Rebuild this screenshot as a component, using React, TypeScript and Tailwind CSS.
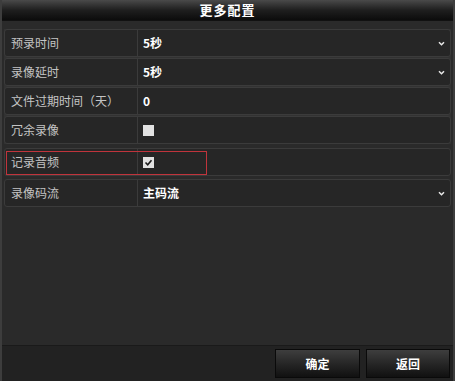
import React from 'react';

const font = { fontFamily: '"Noto Sans CJK SC", "Noto Sans", sans-serif' };

type Row = {
  label: string;
  kind: 'select' | 'text' | 'check';
  value?: string;
  checked?: boolean;
};

const rows: Row[] = [
  { label: '预录时间', kind: 'select', value: '5秒' },
  { label: '录像延时', kind: 'select', value: '5秒' },
  { label: '文件过期时间（天）', kind: 'text', value: '0' },
  { label: '冗余录像', kind: 'check', checked: false },
];

const Chevron = () => (
  <svg width="7" height="5" viewBox="0 0 7 5" className="mr-[5px]">
    <path d="M1 1.2 L3.5 3.7 L6 1.2" stroke="#e8e8e8" strokeWidth="1.5" fill="none" />
  </svg>
);

const Checkbox = ({ checked }: { checked?: boolean }) => (
  <div className="w-[11px] h-[11px] bg-[#e2e2e2] flex items-center justify-center">
    {checked && (
      <svg width="9" height="9" viewBox="0 0 9 9">
        <path d="M1.5 4.5 L3.7 6.7 L7.5 2.2" stroke="#1a1a1a" strokeWidth="1.6" fill="none" />
      </svg>
    )}
  </div>
);

const SettingRow = ({ row, highlight }: { row: Row; highlight?: boolean }) => (
  <div className="relative h-[28px] flex border border-[#3b3b3b] rounded-[3px] bg-[#262626]">
    <div className="w-[133px] shrink-0 flex items-center pl-[6px] text-[12px] text-[#c4c4c4] border-r border-[#3b3b3b]">
      {row.label}
    </div>
    <div className="flex-1 flex items-center justify-between pl-[5px] text-[12px] text-white font-bold">
      {row.kind === 'check' ? <Checkbox checked={row.checked} /> : <span>{row.value}</span>}
      {row.kind === 'select' && <Chevron />}
    </div>
    {highlight && (
      <div className="absolute left-[1px] top-[2px] w-[201px] h-[24px] border border-[#c0343c]" />
    )}
  </div>
);

export default function App() {
  return (
    <div
      className="w-[455px] h-[381px] bg-[#2a2a2a] flex flex-col border-x-[2px] border-[#3d3d3d] overflow-hidden"
      style={font}
    >
      <div className="h-[21px] shrink-0 flex items-center justify-center bg-gradient-to-b from-[#4a4a4a] via-[#1f1f1f] to-[#0c0c0c] border-b border-[#111]">
        <span className="text-white text-[13px] font-bold tracking-[1px]">更多配置</span>
      </div>
      <div className="flex flex-col px-[2px] pt-[8px]">
        <div className="flex flex-col gap-[1px] bg-[#323232]">
          {rows.map((r) => (
            <SettingRow key={r.label} row={r} />
          ))}
        </div>
        <div className="mt-[4px] flex flex-col gap-[3px]">
          <SettingRow row={{ label: '记录音频', kind: 'check', checked: true }} highlight />
          <SettingRow row={{ label: '录像码流', kind: 'select', value: '主码流' }} />
        </div>
      </div>
      <div className="flex-1" />
      <div className="h-[36px] shrink-0 bg-[#222222] border-t border-[#1a1a1a] flex items-center justify-end gap-[6px] pr-[3px]">
        <button className="w-[85px] h-[29px] bg-gradient-to-b from-[#3e3e3e] to-[#111111] border border-[#0a0a0a] text-white text-[12px] font-bold">
          确定
        </button>
        <button className="w-[84px] h-[29px] bg-gradient-to-b from-[#3e3e3e] to-[#111111] border border-[#0a0a0a] text-white text-[12px] font-bold">
          返回
        </button>
      </div>
    </div>
  );
}
